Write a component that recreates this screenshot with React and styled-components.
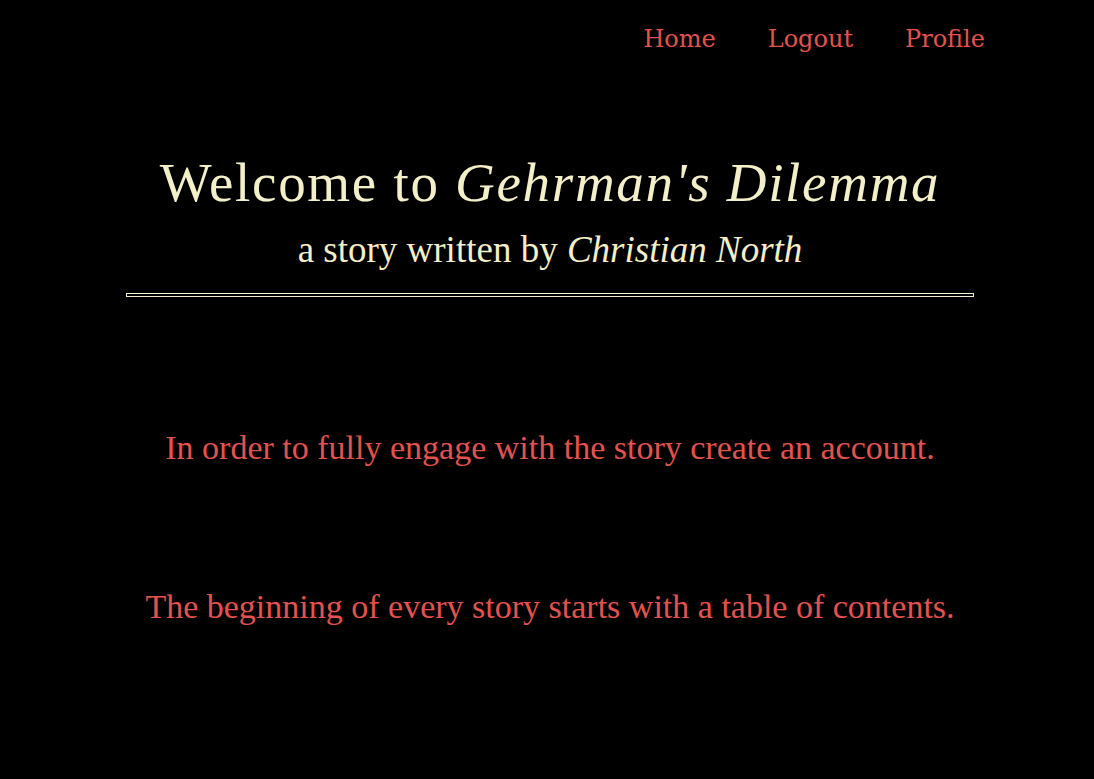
import styled, { createGlobalStyle } from "styled-components";

const Global = createGlobalStyle`
  html, body {
    margin: 0;
    padding: 0;
    background: #000;
  }
  body {
    font-family: "Liberation Serif", "Times New Roman", serif;
  }
`;

const Page = styled.div`
  min-height: 779px;
  background: #000;
  display: flex;
  flex-direction: column;
  align-items: center;
`;

const Nav = styled.nav`
  align-self: stretch;
  display: flex;
  justify-content: flex-end;
  gap: 52px;
  padding: 24px 109px 0 0;
  height: 40px;
`;

const NavLink = styled.a`
  font-family: "DejaVu Serif", serif;
  font-size: 24px;
  line-height: 30px;
  color: #e2534f;
  text-decoration: none;
  cursor: pointer;
`;

const Header = styled.header`
  display: flex;
  flex-direction: column;
  align-items: center;
  margin-top: 87px;
  padding-left: 6px;
`;

const Title = styled.h1`
  margin: 0;
  font-size: 55px;
  font-weight: normal;
  line-height: 64px;
  color: #f3efc8;
  letter-spacing: 1.7px;
`;

const Subtitle = styled.h2`
  margin: 14px 0 0;
  font-size: 37px;
  font-weight: normal;
  line-height: 42px;
  color: #f3efc8;
`;

const Rule = styled.hr`
  width: 846px;
  height: 2px;
  margin: 22px 0 0 6px;
  border: 1px solid #f3efc8;
`;

const Message = styled.p`
  margin: ${(p) => p.$top}px 0 0;
  padding-left: 6px;
  font-size: 34px;
  line-height: 40px;
  color: #e2534f;
  text-align: center;
`;

export default function App() {
  return (
    <Page>
      <Global />
      <Nav>
        <NavLink>Home</NavLink>
        <NavLink>Logout</NavLink>
        <NavLink>Profile</NavLink>
      </Nav>
      <Header>
        <Title>
          Welcome to <i>Gehrman's Dilemma</i>
        </Title>
        <Subtitle>
          a story written by <i>Christian North</i>
        </Subtitle>
      </Header>
      <Rule />
      <Message $top={131}>
        In order to fully engage with the story create an account.
      </Message>
      <Message $top={119}>
        The beginning of every story starts with a table of contents.
      </Message>
    </Page>
  );
}
